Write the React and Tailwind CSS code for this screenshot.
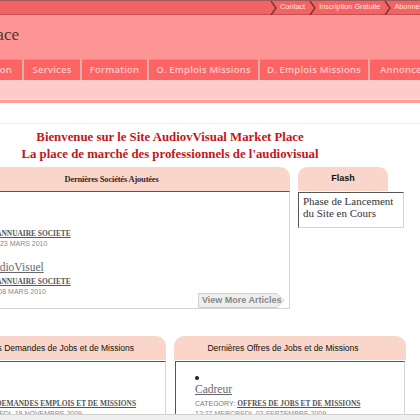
import React from "react";

const SANS = "font-['Liberation_Sans',Arial,sans-serif]";
const SERIF = "font-['Liberation_Serif','Times_New_Roman',serif]";
const NAVF = "font-['Open_Sans',Verdana,sans-serif]";

function Chevron() {
  return (
    <svg width="7" height="14" viewBox="0 0 7 14" className="shrink-0 block">
      <path d="M1 0 L6 7 L1 14" fill="none" stroke="#7e2d2d" strokeWidth="1.3" />
    </svg>
  );
}

function TopBar() {
  return (
    <div className="h-[15px] bg-[#f26464] border-t border-t-[#a05a5a] border-b border-b-[#c44f4f] flex items-center">
      <div className={`ml-[270px] flex items-center whitespace-nowrap text-[7.3px] text-[#ffe4e4] ${SANS}`}>
        <Chevron />
        <span className="ml-[3px]">Contact</span>
        <span className="ml-[4px]"><Chevron /></span>
        <span className="ml-[3px]">Inscription Gratuite</span>
        <span className="ml-[4px]"><Chevron /></span>
        <span className="ml-[3px]">Abonnements</span>
      </div>
    </div>
  );
}

function Header() {
  return (
    <div className="h-[44px] bg-[#ff9494] flex items-start">
      <div className="w-[19px] flex justify-end whitespace-nowrap pt-[10px]">
        <span className={`text-[17px] leading-[20px] text-[#4a3838] ${SERIF}`}>AudioVisual Market Place</span>
      </div>
    </div>
  );
}

const tabs = [
  { label: "Services", w: "w-[56px]" },
  { label: "Formation", w: "w-[65px]" },
  { label: "O. Emplois Missions", w: "w-[109px]" },
  { label: "D. Emplois Missions", w: "w-[108px]" },
];

function Nav() {
  return (
    <div className="bg-[#ff9494]">
      <div className={`h-[21px] flex items-stretch whitespace-nowrap text-[9.5px] font-semibold tracking-[0.2px] text-[#ffcaca] ${NAVF}`}>
        <div className="w-[22px] shrink-0 flex justify-end bg-[#ff6464] border-t border-t-[#e58a8a]">
          <span className="pr-[10px] flex items-center">Présentation</span>
        </div>
        {tabs.map((t) => (
          <React.Fragment key={t.label}>
            <div className="w-[2px] shrink-0 bg-[#d9aeae]" />
            <div className={`${t.w} shrink-0 flex items-center justify-center bg-[#ff6464] border-t border-t-[#e58a8a]`}>
              {t.label}
            </div>
          </React.Fragment>
        ))}
        <div className="w-[2px] shrink-0 bg-[#d9aeae]" />
        <div className="flex-1 flex items-center pl-[10px] bg-[#ff6464] border-t border-t-[#e58a8a]">Annonces</div>
      </div>
      <div className="h-[19px] bg-[#ffcaca]" />
      <div className="h-px bg-[#ffe2e2]" />
      <div className="h-[3px] bg-[#ff9d9d]" />
    </div>
  );
}

function Item({ title, category, date }) {
  return (
    <li className="mb-[2px] whitespace-nowrap">
      <div className="h-[10px] flex items-center">
        <span className="w-[4px] h-[4px] rounded-full bg-[#222]" />
      </div>
      <div className={`h-[12px] leading-[12px] text-[11.5px] text-[#666] underline ${SERIF}`}>{title}</div>
      <div className={`mt-[4px] h-[10px] leading-[10px] text-[7px] text-[#777] ${SANS}`}>
        CATEGORY: <span className={`font-bold underline text-[#555] text-[7.4px] ${SERIF}`}>{category}</span>
      </div>
      <div className={`h-[10px] leading-[10px] text-[7px] text-[#888] ${SANS}`}>{date}</div>
    </li>
  );
}

function BoxHeader({ children, className }) {
  return (
    <div className={`h-[24px] bg-[#f9d6c9] flex items-center justify-center whitespace-nowrap ${className}`}>
      {children}
    </div>
  );
}

function MoreButton() {
  return (
    <div className="relative w-[87px] h-[15px]">
      <svg className="absolute inset-0" width="87" height="15" viewBox="0 0 87 15">
        <path d="M0.5 0.5 H79 L86 7.5 L79 14.5 H0.5 Z" fill="#eeeeee" stroke="#d0d0d0" />
      </svg>
      <span className={`relative block pl-[4px] leading-[15px] text-[9px] font-bold text-[#888] ${SANS}`}>View More Articles</span>
    </div>
  );
}

export default function App() {
  return (
    <div className="w-[420px] h-[420px] overflow-hidden relative bg-white">
      <TopBar />
      <Header />
      <Nav />
      <div className="h-[20px]" />
      <div className="h-px bg-[#ececec]" />

      <div className="-ml-[67px] w-[474px]">
        <div className={`pt-[5px] text-center text-[12.8px] leading-[17px] font-bold text-[#c2161b] ${SERIF}`}>
          <div>Bienvenue sur le Site AudiovVisual Market Place</div>
          <div>La place de marché des professionnels de l'audiovisual</div>
        </div>

        <div className="mt-[4px] flex items-start">
          <div className="w-[357px] shrink-0">
            <BoxHeader className="rounded-tr-[10px]">
              <span className={`text-[8.5px] font-bold text-[#3a2828] tracking-[-0.2px] ${SERIF}`}>Dernières Sociétés Ajoutées</span>
            </BoxHeader>
            <div className="h-[118px] border-t border-l border-t-[#555] border-l-[#555] border-r border-b border-r-[#d4d4d4] border-b-[#d4d4d4] pl-[20px] pt-[11px]">
              <ul>
                <Item title="Ciné Pro" category="ANNUAIRE SOCIETE" date="10:15 MARDI, 23 MARS 2010" />
                <Item title="Média AudioVisuel" category="ANNUAIRE SOCIETE" date="10:15 LUNDI, 08 MARS 2010" />
              </ul>
              <div className="-mt-[6px] flex justify-end pr-[4px]">
                <MoreButton />
              </div>
            </div>
          </div>

          <div className="ml-[8px] w-[106px] shrink-0">
            <div className="w-[90px] h-[24px] rounded-t-[9px] bg-[#f9d6c9] flex items-center justify-center">
              <span className={`text-[9px] font-bold text-[#111] ${SANS}`}>Flash</span>
            </div>
            <div className={`mt-[1px] h-[36px] border-t border-l border-t-[#555] border-l-[#555] border-r border-b border-r-[#d4d4d4] border-b-[#d4d4d4] pl-[4px] pt-[2px] text-[11px] leading-[12px] text-[#333] ${SERIF}`}>
              <div>Phase de Lancement</div>
              <div>du Site en Cours</div>
            </div>
          </div>
        </div>

        <div className="mt-[27px] flex items-start">
          <div className="w-[233px] shrink-0">
            <BoxHeader className="rounded-tr-[10px]">
              <span className={`text-[8.5px] text-[#111] ${SANS}`}>Dernières Demandes de Jobs et de Missions</span>
            </BoxHeader>
            <div className="mt-px h-[80px] border-t border-l border-t-[#555] border-l-[#555] border-r border-r-[#d4d4d4] pl-[20px] pt-[11px]">
              <ul>
                <Item title="Monteur" category="DEMANDES EMPLOIS ET DE MISSIONS" date="10:05 MERCREDI, 18 NOVEMBRE 2009" />
              </ul>
            </div>
          </div>
          <div className="ml-[8px] w-[232px] shrink-0">
            <BoxHeader className="rounded-tr-[10px] rounded-tl-[10px] pr-[14px]">
              <span className={`text-[8.5px] text-[#111] ${SANS}`}>Dernières Offres de Jobs et de Missions</span>
            </BoxHeader>
            <div className="mt-px ml-px w-[230px] h-[80px] border-t border-l border-t-[#555] border-l-[#555] border-r border-r-[#d4d4d4] pl-[19px] pt-[11px]">
              <ul>
                <Item title="Cadreur" category="OFFRES DE JOBS ET DE MISSIONS" date="12:27 MERCREDI, 02 SEPTEMBRE 2009" />
              </ul>
            </div>
          </div>
        </div>
      </div>

      <div className="absolute left-0 right-0 bottom-0 h-[6px] bg-[#efefef] border-t border-t-[#cfcfcf]" />
    </div>
  );
}
